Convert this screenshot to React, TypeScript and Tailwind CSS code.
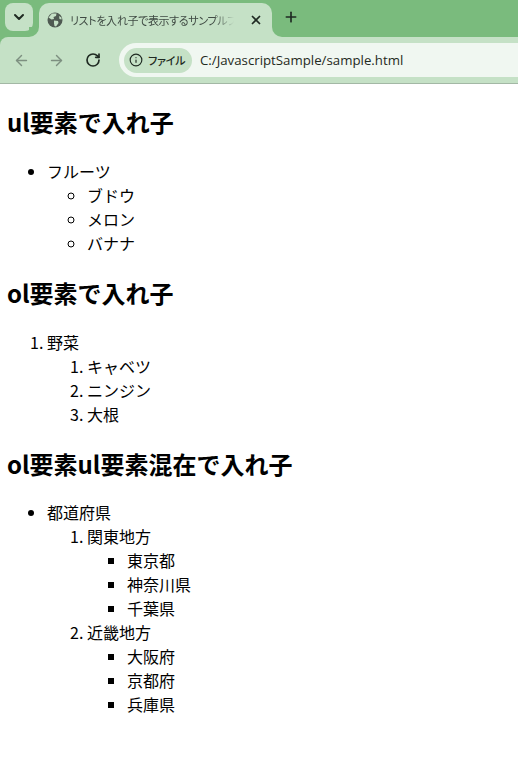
import { ArrowLeft, ArrowRight, ChevronDown, Info, Plus, RotateCw, X } from 'lucide-react';

const cjk = "font-['Noto_Sans_CJK_JP','Noto_Sans',sans-serif]";

function GlobeIcon() {
    return (
        <svg width="16" height="16" viewBox="0 0 16 16" className="shrink-0">
            <circle cx="8" cy="8" r="7.5" fill="#4f5a52" />
            <path d="M5 1.5 L9.5 1.5 L9 4 L6.5 5 L7 7 L4.5 7.5 L1.5 5.5 Z" fill="#c5e1c6" />
            <path d="M7 8.5 L11 9 L11.5 11 L9 14.5 L7.5 14 L7 11.5 Z" fill="#c5e1c6" />
            <path d="M12 4 L14.5 5.5 L14.5 7.5 L12.5 7 Z" fill="#c5e1c6" />
        </svg>
    );
}

function TabBar() {
    return (
        <div className="flex h-[37px] items-start pt-[3px]">
            <div className="ml-[5px] flex h-[28px] w-[28px] items-center justify-center rounded-lg bg-[#c5e1c6]">
                <ChevronDown size={16} strokeWidth={3} color="#1f2a22" />
            </div>
            <div className="relative ml-[6px] flex h-[34px] w-[233px] items-center rounded-t-[10px] bg-[#c5e1c6] pr-[9px] pl-[8px]">
                <GlobeIcon />
                <div className="ml-[7px] w-[164px] overflow-hidden font-['Noto_Sans_CJK_JP',sans-serif] text-[11px] tracking-[-0.35px] whitespace-nowrap text-[#3f4a43] [font-feature-settings:'palt'] [mask-image:linear-gradient(to_right,black_88%,transparent)]">
                    リストを入れ子で表示するサンプルプログラム
                </div>
                <X size={14} strokeWidth={3} color="#1f2a22" className="ml-auto" />
                {/* concave joins into the toolbar */}
                <div className="absolute right-[-10px] bottom-0 h-[10px] w-[10px] bg-[#c5e1c6]">
                    <div className="h-full w-full rounded-bl-[10px] bg-[#7abb7d]" />
                </div>
                <div className="absolute bottom-0 left-[-10px] h-[10px] w-[10px] bg-[#c5e1c6]">
                    <div className="h-full w-full rounded-br-[10px] bg-[#7abb7d]" />
                </div>
            </div>
            <div className="ml-[5px] flex h-[28px] w-[28px] items-center justify-center">
                <Plus size={16} strokeWidth={2.5} color="#1f2a22" />
            </div>
        </div>
    );
}

function Toolbar() {
    return (
        <div className="flex h-[47px] items-center rounded-tl-[8px] border-b border-[#a3b8a5] bg-[#c5e1c6] pl-[13px]">
            <ArrowLeft size={17} strokeWidth={2} color="#7d8f80" />
            <ArrowRight size={17} strokeWidth={2} color="#7d8f80" className="ml-[18px]" />
            <RotateCw size={16} strokeWidth={2.5} color="#1f2a22" className="ml-[20px]" />
            <div className="ml-[18px] flex h-[34px] flex-1 items-center rounded-l-full bg-[#f0f7f1] pl-[5px]">
                <div className="flex h-[25px] w-[68px] items-center rounded-full bg-[#c5e1c6] pl-[5px]">
                    <Info size={14} strokeWidth={2} color="#1f2a22" />
                    <span className={`ml-[5px] text-[11px] font-medium tracking-[-0.2px] whitespace-nowrap text-[#1f2a22] [font-feature-settings:'palt'] ${cjk}`}>ファイル</span>
                </div>
                <span className="mt-[2px] ml-[8px] font-['Open_Sans',sans-serif] text-[13.25px] text-[#1f2a22]">C:/JavascriptSample/sample.html</span>
            </div>
        </div>
    );
}

export default function App() {
    return (
        <div className={`min-h-[760px] bg-white text-[16px] text-black ${cjk}`}>
            <div className="bg-[#7abb7d]">
                <TabBar />
                <Toolbar />
            </div>
            <div className="px-[7px] leading-[24px]">
                <h2 className="my-[19.92px] text-[24px] leading-[35px] font-bold">ul要素で入れ子</h2>
                <ul className="list-disc pl-10">
                    <li>
                        フルーツ
                        <ul className="list-[circle] pl-10">
                            <li>ブドウ</li>
                            <li>メロン</li>
                            <li>バナナ</li>
                        </ul>
                    </li>
                </ul>
                <h2 className="my-[19.92px] text-[24px] leading-[35px] font-bold">ol要素で入れ子</h2>
                <ol className="list-decimal pl-10">
                    <li>
                        野菜
                        <ol className="list-decimal pl-10">
                            <li>キャベツ</li>
                            <li>ニンジン</li>
                            <li>大根</li>
                        </ol>
                    </li>
                </ol>
                <h2 className="my-[19.92px] text-[24px] leading-[35px] font-bold">ol要素ul要素混在で入れ子</h2>
                <ul className="list-disc pl-10">
                    <li>
                        都道府県
                        <ol className="list-decimal pl-10">
                            <li>
                                関東地方
                                <ul className="list-[square] pl-10">
                                    <li>東京都</li>
                                    <li>神奈川県</li>
                                    <li>千葉県</li>
                                </ul>
                            </li>
                            <li>
                                近畿地方
                                <ul className="list-[square] pl-10">
                                    <li>大阪府</li>
                                    <li>京都府</li>
                                    <li>兵庫県</li>
                                </ul>
                            </li>
                        </ol>
                    </li>
                </ul>
            </div>
        </div>
    );
}
